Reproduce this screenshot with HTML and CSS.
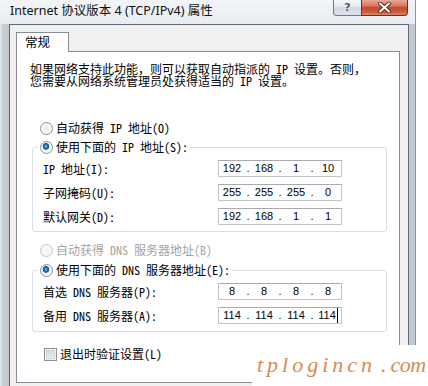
FILE: index.html
```html
<!DOCTYPE html>
<html lang="zh-CN">
<head>
<meta charset="utf-8">
<title>Internet 协议版本 4 (TCP/IPv4) 属性</title>
<link rel="stylesheet" href="styles.css">
</head>
<body>
<div class="window">
  <div class="titlebar">
    <span class="title">Internet 协议版本 4 (TCP/IPv4) 属性</span>
    <div class="caption-buttons">
      <div class="cap help">?</div>
      <div class="cap close">
        <svg width="13" height="11" viewBox="0 0 13 11">
          <path d="M2 1.5 L11 9.5 M11 1.5 L2 9.5" stroke="#5b2a22" stroke-width="4" stroke-linecap="round"/>
          <path d="M2 1.5 L11 9.5 M11 1.5 L2 9.5" stroke="#ffffff" stroke-width="2" stroke-linecap="round"/>
        </svg>
      </div>
    </div>
  </div>
  <div class="frame-body">
    <div class="client">
      <div class="tabs"><div class="tab">常规</div></div>
      <div class="panel">
        <div class="desc">
          <div class="desc-line">如果网络支持此功能，则可以获取自动指派的 IP 设置。否则，</div>
          <div class="desc-line">您需要从网络系统管理员处获得适当的 IP 设置。</div>
        </div>

        <div class="option first"><span class="radio"></span><span>自动获得 IP 地址(O)</span></div>
        <fieldset class="group ip-group">
          <legend class="option"><span class="radio checked"></span><span>使用下面的 IP 地址(S):</span></legend>
          <div class="row">
            <span class="label">IP 地址(I):</span>
            <div class="ipbox"><span class="seg">192</span><span class="dot">.</span><span class="seg">168</span><span class="dot">.</span><span class="seg">1</span><span class="dot">.</span><span class="seg">10</span></div>
          </div>
          <div class="row">
            <span class="label">子网掩码(U):</span>
            <div class="ipbox"><span class="seg">255</span><span class="dot">.</span><span class="seg">255</span><span class="dot">.</span><span class="seg">255</span><span class="dot">.</span><span class="seg">0</span></div>
          </div>
          <div class="row">
            <span class="label">默认网关(D):</span>
            <div class="ipbox"><span class="seg">192</span><span class="dot">.</span><span class="seg">168</span><span class="dot">.</span><span class="seg">1</span><span class="dot">.</span><span class="seg">1</span></div>
          </div>
        </fieldset>

        <div class="option dns-auto disabled"><span class="radio"></span><span>自动获得 DNS 服务器地址(B)</span></div>
        <fieldset class="group dns-group">
          <legend class="option"><span class="radio checked"></span><span>使用下面的 DNS 服务器地址(E):</span></legend>
          <div class="row">
            <span class="label">首选 DNS 服务器(P):</span>
            <div class="ipbox"><span class="seg">8</span><span class="dot">.</span><span class="seg">8</span><span class="dot">.</span><span class="seg">8</span><span class="dot">.</span><span class="seg">8</span></div>
          </div>
          <div class="row">
            <span class="label">备用 DNS 服务器(A):</span>
            <div class="ipbox"><span class="seg">114</span><span class="dot">.</span><span class="seg">114</span><span class="dot">.</span><span class="seg">114</span><span class="dot">.</span><span class="seg">114<span class="caret"></span></span></div>
          </div>
        </fieldset>

        <div class="option check-row"><span class="checkbox"></span><span>退出时验证设置(L)</span></div>
      </div>
    </div>
  </div>
  <div class="watermark"><span class="wm-main">tplogincn</span><span class="wm-dot">.</span><span class="wm-com">com</span></div>
</div>
</body>
</html>
```

FILE: styles.css
```css
* { box-sizing: border-box; }

html, body {
  margin: 0;
  padding: 0;
  background: #ffffff;
}

body {
  width: 428px;
  height: 386px;
  overflow: hidden;
  font-family: "Noto Sans Mono CJK SC", "Noto Sans CJK SC", sans-serif;
  font-size: 12px;
  color: #000;
}

.window {
  position: relative;
  width: 416px;
  height: 386px;
  background: linear-gradient(90deg, #e6e9ed 0px, #c9cfd6 3px, #c3c9d1 8px);
  border-right: 1px solid #8d949c;
  display: flex;
  flex-direction: column;
}

.titlebar {
  height: 24px;
  flex: none;
  display: flex;
  justify-content: space-between;
  align-items: flex-start;
  background: linear-gradient(#f2f4f7, #e8ecf1);
  padding-left: 10px;
  padding-right: 7px;
}

.title {
  font-family: "Noto Sans", "Noto Sans CJK SC", sans-serif;
  font-size: 12.5px;
  line-height: 22px;
  color: #111;
  white-space: nowrap;
}

.caption-buttons {
  display: flex;
}

.cap {
  height: 16px;
  display: flex;
  align-items: center;
  justify-content: center;
}

.help {
  width: 28px;
  border: 1px solid #707c8a;
  border-top: none;
  border-right: none;
  border-radius: 0 0 0 4px;
  background: linear-gradient(#f5f7fa 0%, #e6eaf0 45%, #d3dae3 50%, #dbe2ea 100%);
  font-family: "DejaVu Sans", sans-serif;
  font-size: 11px;
  font-weight: bold;
  color: #50565e;
  text-shadow: 0 0 2px #fff;
}

.close {
  width: 47px;
  border: 1px solid #6a3129;
  border-top: none;
  border-radius: 0 0 4px 0;
  background: linear-gradient(#e9a797 0%, #d9775f 40%, #c44a30 50%, #cf5a3c 80%, #e0866b 100%);
}

.frame-body {
  flex: 1;
  padding: 0 6px 0 9px;
  display: flex;
  flex-direction: column;
}

.client {
  flex: 1;
  background: #f0f0f0;
  border: 1px solid #5f6a77;
  border-bottom: none;
  padding: 7px 0 0 6px;
}

.tabs {
  display: flex;
  position: relative;
  z-index: 1;
  margin-bottom: -1px;
}

.tab {
  width: 53px;
  height: 20px;
  background: #fff;
  border: 1px solid #898c95;
  border-bottom: none;
  padding-left: 8px;
  line-height: 18px;
  font-family: "Noto Sans CJK SC", sans-serif;
  font-size: 12.5px;
}

.panel {
  width: 384px;
  height: 332px;
  background: #fff;
  border: 1px solid #898c95;
  display: flex;
  flex-direction: column;
  align-items: flex-start;
}

.desc {
  margin: 11px 0 0 13px;
  display: flex;
  flex-direction: column;
}

.desc-line {
  height: 12px;
  line-height: 12px;
  white-space: nowrap;
}

.option {
  display: flex;
  align-items: center;
  gap: 3px;
  height: 16px;
  line-height: 16px;
  white-space: nowrap;
}

.option.first {
  margin: 33px 0 0 23px;
}

.option.dns-auto {
  margin: 10px 0 0 23px;
}

.option.disabled {
  color: #a3a3a3;
}

.option.check-row {
  margin: 14px 0 0 27px;
}

.radio {
  width: 13px;
  height: 13px;
  flex: none;
  border-radius: 50%;
  border: 1px solid #8e8f8f;
  background: radial-gradient(circle at 50% 50%, #e6e6e6 0, #f4f4f4 3px, #fdfdfd 6px);
}

.disabled .radio {
  border-color: #c6c6c6;
  background: #f7f7f7;
}

.radio.checked {
  background:
    radial-gradient(circle at 45% 40%, #8cc3ea 0, #2d7bc0 1.5px, #14508e 3px, transparent 3.6px),
    radial-gradient(circle at 50% 50%, #dfe6ee 0, #f4f4f4 4px, #fdfdfd 6px);
}

.checkbox {
  width: 13px;
  height: 13px;
  flex: none;
  border: 1px solid #8e8f8f;
  background: linear-gradient(#cfd2d6, #f2f2f2);
  box-shadow: inset 0 0 0 1px #f4f4f4, inset 0 0 0 2px #d0d3d7;
}

.group {
  margin: 0;
  width: 355px;
  border: 1px solid #d5dfe5;
  border-radius: 3px;
  padding: 5px 0 6px 10px;
  min-width: 0;
}

.ip-group {
  margin: 3px 0 0 15px;
}

.dns-group {
  margin: 4px 0 0 15px;
  padding-bottom: 7px;
}

.group legend {
  margin-left: -5px;
  padding: 0 2px;
}

.row {
  display: flex;
  align-items: center;
  height: 17px;
}

.row + .row {
  margin-top: 7px;
}

.label {
  width: 175px;
  flex: none;
  white-space: nowrap;
}

.ipbox {
  width: 124px;
  height: 17px;
  border: 1px solid #c3c5c9;
  border-top-color: #a7aab0;
  display: grid;
  grid-template-columns: 1fr 6px 1fr 6px 1fr 6px 1fr;
  align-items: center;
  font-family: "Liberation Sans", sans-serif;
  font-size: 11px;
  line-height: 15px;
}

.seg {
  text-align: center;
}

.dot {
  text-align: center;
}

.caret {
  display: inline-block;
  width: 1px;
  height: 15px;
  background: #000;
  vertical-align: top;
  margin-left: 1px;
}

.watermark {
  position: absolute;
  left: 252px;
  top: 345px;
  width: 176px;
  height: 41px;
  background: #fff;
  font-family: "Liberation Serif", serif;
  font-style: italic;
  font-size: 22px;
  line-height: 22px;
  color: #d58a56;
  padding: 9px 0 0 5px;
  white-space: nowrap;
}

.wm-main {
  letter-spacing: 4px;
}

.wm-dot {
  margin-left: 5px;
}

.wm-com {
  margin-left: 4px;
  letter-spacing: -0.5px;
}
```
